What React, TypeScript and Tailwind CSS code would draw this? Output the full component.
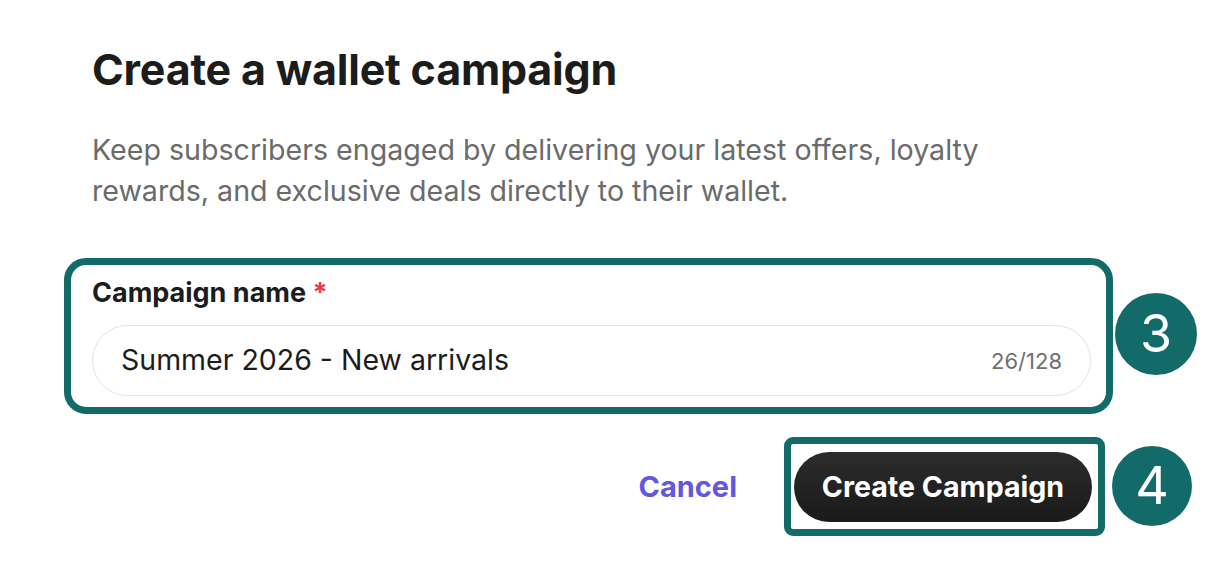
import React from 'react';

function StepBadge({ n, className }: { n: string; className: string }) {
  return (
    <div
      className={`absolute flex items-center justify-center rounded-full bg-[#136b69] text-[52px] font-normal leading-none text-white ${className}`}
    >
      {n}
    </div>
  );
}

export default function App() {
  return (
    <div className="min-h-[562px] w-[1208px] bg-white font-['Inter','Liberation_Sans',sans-serif] text-[#1c1c1c]">
      <div className="w-[1092px] pl-[92px] pt-[42px]">
        <h1 className="text-[43px] font-bold leading-[54px] tracking-[-0.2px]">Create a wallet campaign</h1>
        <p className="mt-[33px] w-[910px] text-[28.6px] leading-[41px] text-[#6b6b6b]">
          Keep subscribers engaged by delivering your latest offers, loyalty rewards, and exclusive deals directly to
          their wallet.
        </p>

        {/* field, highlighted */}
        <div className="relative mt-[47px] -ml-[28px] w-[1049px] rounded-[22px] border-[7px] border-[#136b69] pt-[11px] pb-[11px] pl-[21px] pr-[15px]">
          <label className="block text-[27px] font-bold leading-[34px]">
            Campaign name <span className="text-[#f0384f]">*</span>
          </label>
          <div className="mt-[15px] flex h-[71px] items-center justify-between rounded-full border border-[#e3e3e3] pl-[28px] pr-[28px]">
            <span className="text-[28.5px] leading-none">Summer 2026 - New arrivals</span>
            <span className="text-[22px] leading-none text-[#707070]">26/128</span>
          </div>
          <StepBadge n="3" className="-right-[91px] top-[28px] h-[82px] w-[82px]" />
        </div>

        {/* actions */}
        <div className="mt-[23px] flex items-center justify-end">
          <button className="mr-[47px] text-[29px] font-bold text-[#6356e0]">Cancel</button>
          <div className="relative -mr-[13px] rounded-[9px] border-[7px] border-[#136b69] pt-[8px] pb-[7px] pl-[3px] pr-[6px]">
            <button className="flex h-[70px] w-[298px] items-center justify-center rounded-full bg-gradient-to-b from-[#2c2c2c] to-[#1a1a1a] text-[28.6px] font-bold text-white">
              Create Campaign
            </button>
            <StepBadge n="4" className="-right-[94px] top-[2px] h-[80px] w-[80px]" />
          </div>
        </div>
      </div>
    </div>
  );
}
